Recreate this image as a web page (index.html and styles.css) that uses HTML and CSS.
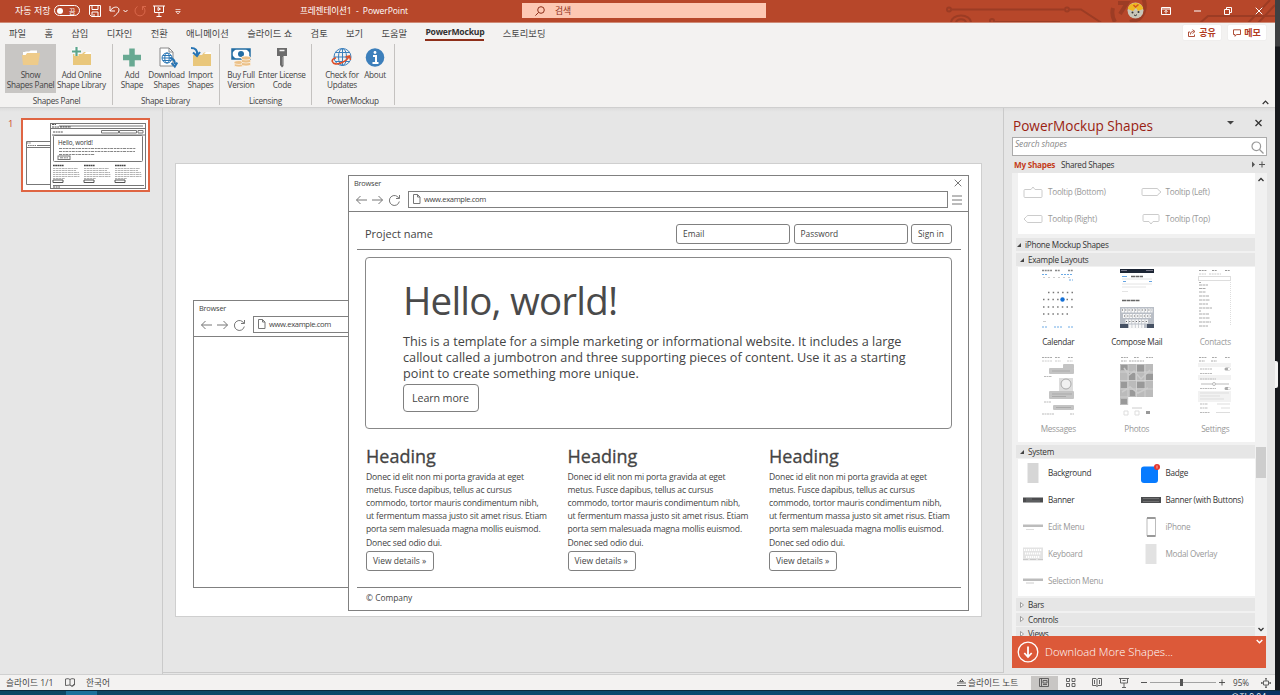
FILE: index.html
```html
<!DOCTYPE html>
<html lang="ko">
<head>
    <meta charset="UTF-8">
    <meta name="viewport" content="width=device-width, initial-scale=1.0">
    <title>프레젠테이션1 - PowerPoint</title>
    <link rel="stylesheet" href="styles.css">
</head>
<body>
<div class="screen">
    <div class="app">
        <!-- title bar -->
        <div class="titlebar">
            <svg class="circuit" width="375" height="22" viewBox="900 0 375 22" fill="none" stroke="#9c3c24" stroke-width="2">
                <circle cx="949" cy="9.500" r="2"/><path d="M951 9.500h113"/><circle cx="1067" cy="9.500" r="2"/><path d="M1069 9.500h12l20 13"/>
                <path d="M951 23c0-10 20-10 20 0M956 23c0-5 10-5 10 0"/><circle cx="992" cy="21" r="2"/><path d="M994 22h66"/>
                <path d="M1113 8a18 18 0 0 0 2 14M1118 3h9l-7 11M1143 -2a18 18 0 0 1-4 21l-9 3" stroke-width="4"/>
                <path d="M1200 23l8-7h67M1248 23l22-23M1258 23l17-18"/>
            </svg>
            <div class="quick">
                <span>자동 저장</span>
                <span class="toggle"><i></i>끔</span>
                <svg class="q-save" width="12" height="12" viewBox="0 0 12 12"><path d="M.5.5h11v11h-9l-2-2zM3 .5v4h6v-4M3 11.500V7h6v4.500M5 9v2"/></svg>
                <svg class="q-undo" width="20" height="12" viewBox="0 0 20 12"><path d="M1 1v5h5M1 6c3-5 9-5 9-1 0 3-3 4-5 6.500M14.500 5l2 2 2-2"/></svg>
                <svg class="q-redo" width="12" height="12" viewBox="0 0 12 12"><path d="M3.500 1.500a5 5 0 1 0 5 0M8.500 5V1.500H12"/></svg>
                <svg class="q-show" width="12" height="12" viewBox="0 0 12 12"><path d="M0 1h12M1.500 1v6.500h9V1M6 7.500V11M3.500 11.500h5M5 2.500v3l2.500-1.500z"/></svg>
                <svg class="q-more" width="6" height="6" viewBox="0 0 6 6"><path d="M.5.5h5M.8 2.500h4.400L3 5z" stroke-width=".7"/></svg>
            </div>
            <div class="doc-title">프레젠테이션1&nbsp; - &nbsp;PowerPoint</div>
            <div class="search">
                <svg width="10" height="10" viewBox="0 0 10 10"><circle cx="6" cy="4" r="3.300"/><path d="M3.600 6.400L.4 9.600"/></svg>
                <span>검색</span>
            </div>
            <div class="win-buttons">
                <svg class="avatar" width="17" height="17" viewBox="0 0 17 17"><circle cx="8.500" cy="8.500" r="8" fill="#c9c6b8"/><path d="M.8 7C2-1 15-1 16.200 7L11 9 9 6 6 9z" fill="#eeb823"/><path d="M6.500 3l2 2 3-2.500" stroke="#d3541f" stroke-width="1.500" fill="none"/><circle cx="5.500" cy="10.500" r="1" fill="#333"/><circle cx="11.500" cy="10" r="1" fill="#333"/><path d="M7 13q2 1.500 3-.5" stroke="#333" fill="none"/></svg>
                <svg width="10" height="8" viewBox="0 0 10 8"><path d="M.5.5h9v7h-9zM.5 2h9M5 6.500v-3M3.500 4.800L5 3.300l1.500 1.500"/></svg>
                <svg width="7" height="8" viewBox="0 0 7 8"><path d="M0 4h7"/></svg>
                <svg width="8" height="8" viewBox="0 0 8 8"><path d="M.5 2.500h5v5h-5zM2.500 2.500v-2h5v5h-2"/></svg>
                <svg width="8" height="8" viewBox="0 0 8 8"><path d="M.7.7l6.600 6.600M7.300.7L.7 7.300"/></svg>
            </div>
        </div>

        <!-- ribbon tabs -->
        <div class="tabs">
            <span>파일</span><span>홈</span><span>삽입</span><span>디자인</span><span>전환</span><span>애니메이션</span><span>슬라이드 쇼</span><span>검토</span><span>보기</span><span>도움말</span><span class="active">PowerMockup</span><span>스토리보딩</span>
            <div class="tab-actions">
                <button class="action"><svg width="8" height="8" viewBox="0 0 8 8"><path d="M2 3H.5v4.500h6V5.500M2.500 5.500c0-2.500 1-3 3-3M4.500.7L7 2.500 4.500 4.500"/></svg>공유</button>
                <button class="action"><svg width="8" height="8" viewBox="0 0 8 8"><path d="M.5.8h7v4.700H3.500L2 7.300V5.500H.5z"/></svg>메모</button>
            </div>
        </div>

        <!-- ribbon -->
        <div class="ribbon">
            <div class="group g1">
                <div class="tools">
                    <div class="tool selected" style="width:51px"><svg width="22" height="22" viewBox="0 0 22 22"><path d="M3 5h6l1.500-1.500H17V8H3z" fill="#fff"/><path d="M2 8h3l1.500-2H20l-2 12H3z" fill="#eecb8a"/><path d="M4 8l1.500-3.500H17V6H7L5.500 8z" fill="#fff"/></svg><p>Show<br>Shapes Panel</p></div>
                    <div class="tool" style="width:51px"><svg width="22" height="22" viewBox="0 0 22 22"><path d="M2 7h9l2-2h7v13H2z" fill="#e9c77b"/><path d="M13 7l2-2h5v2z" fill="#fff"/><path d="M5.500 0v9M1 4.500h9" stroke="#fff" stroke-width="4"/><path d="M5.500 0v9M1 4.500h9" stroke="#5ba58c" stroke-width="2.200"/></svg><p>Add Online<br>Shape Library</p></div>
                </div>
                <div class="group-name">Shapes Panel</div>
            </div>
            <div class="group g2">
                <div class="tools">
                    <div class="tool" style="width:32px"><svg width="22" height="22" viewBox="0 0 22 22"><path d="M11 1.500v18M2 10.500h18" stroke="#68a992" stroke-width="5.500"/></svg><p>Add<br>Shape</p></div>
                    <div class="tool" style="width:37px"><svg width="22" height="22" viewBox="0 0 22 22" fill="none"><path d="M4 1h9l4 4v14H4z" fill="#fff" stroke="#888"/><path d="M13 1v4h4" stroke="#888"/><g stroke="#2875b4"><circle cx="11" cy="11" r="5"/><ellipse cx="11" cy="11" rx="2.200" ry="5"/><path d="M6 11h10M7 8.500h8M7 13.500h8"/><path d="M14 11q5 1 5 6M15.500 16l3.300 3.500 2.500-4" stroke-width="2"/></g></svg><p>Download<br>Shapes</p></div>
                    <div class="tool" style="width:31px"><svg width="22" height="22" viewBox="0 0 22 22"><path d="M3 8h9l2-2.500h7V19H3z" fill="#e9c77b"/><path d="M14 7l2-2h5v2z" fill="#fff"/><path d="M1 1q7 0 6 7M3 5.500L7 9l3-4" fill="none" stroke="#2875b4" stroke-width="2"/></svg><p>Import<br>Shapes</p></div>
                </div>
                <div class="group-name">Shape Library</div>
            </div>
            <div class="group g3">
                <div class="tools">
                    <div class="tool" style="width:34px"><svg width="22" height="22" viewBox="0 0 22 22"><path d="M2 2h18v10H2z" fill="#fff" stroke="#236da3" stroke-width="1.500"/><path d="M2 2h4l-4 4zM20 2h-4l4 4zM2 12V8l4 4z" fill="#236da3"/><circle cx="11" cy="7" r="3" fill="#236da3"/><g fill="#ecc188" stroke="#fff" stroke-width=".6"><ellipse cx="9" cy="18" rx="5" ry="2"/><ellipse cx="9" cy="15.500" rx="5" ry="2"/><ellipse cx="16" cy="17" rx="5" ry="2"/><ellipse cx="16" cy="14" rx="5" ry="2"/><ellipse cx="16" cy="11" rx="5" ry="2"/></g></svg><p>Buy Full<br>Version</p></div>
                    <div class="tool" style="width:48px"><svg width="22" height="22" viewBox="0 0 22 22"><path d="M6 1h10v8h-3.500v10L11 20.500 9 18V9H6z" fill="#6b6b6b"/><path d="M8.500 3.500h5" stroke="#f3f2f1" stroke-width="1.500"/><path d="M12 10v8" stroke="#aaa"/></svg><p>Enter License<br>Code</p></div>
                </div>
                <div class="group-name">Licensing</div>
            </div>
            <div class="group g4">
                <div class="tools">
                    <div class="tool" style="width:38px"><svg width="22" height="22" viewBox="0 0 22 22" fill="none"><g stroke="#3b80bd"><circle cx="11.500" cy="10" r="8.500"/><ellipse cx="11.500" cy="10" rx="4" ry="8.500"/><path d="M3 10h17M4.500 5.500h14M4.500 14.500h14M11.500 1.500v17"/></g><path d="M1 14q2 5 10 1.500 5-2 7-6M14.500 10l4-1 1 4M1 14q1-3 4-3" stroke="#df4e27" stroke-width="1.600"/></svg><p>Check for<br>Updates</p></div>
                    <div class="tool" style="width:28px"><svg width="22" height="22" viewBox="0 0 22 22"><circle cx="11" cy="10.500" r="9.300" fill="#3c7fbb"/><path d="M9 9h3v6.500M8.500 16h6" stroke="#fff" stroke-width="2" fill="none"/><circle cx="11" cy="5.500" r="1.400" fill="#fff"/></svg><p>About</p></div>
                </div>
                <div class="group-name">PowerMockup</div>
            </div>
            <svg class="collapse" width="7" height="5" viewBox="0 0 7 5"><path d="M.7 4l2.800-2.800L6.300 4" fill="none" stroke="#333" stroke-width="1.200"/></svg>
        </div>

        <div class="workspace">
            <!-- slide list -->
            <div class="slides">
                <span class="slide-no">1</span>
                <div class="thumb">
                    <svg width="125" height="70" viewBox="0 0 125 70" fill="none" stroke="#777">
                        <path d="M28 21.500H3.500v43H28M3.500 27.500H28M14 25.500h14" /><path d="M4 23h4M5 25.500h8" stroke-width="1.200" stroke-dasharray="1.500 .7"/>
                        <rect x="27.500" y="3.500" width="95" height="65"/><path d="M28 8.500h94M36 6h84M29 15h93M30 65.500h91"/>
                        <path d="M29 7h7M37 6.800h11M30 12h10M30 67h7M29 4.500h4" stroke="#555" stroke-width="1.200" stroke-dasharray="2 .6"/>
                        <path d="M78.500 10.500h17v2.500h-17zM96.500 10.500h17v2.500h-17zM115 10.500h5v2.500h-5z"/>
                        <rect x="30.500" y="15.500" width="89" height="26" rx="1"/><rect x="35" y="36" width="12" height="3.500"/>
                        <path d="M36 28.500h77M36 31.500h76M36 34.500h36M37 37.800h8" stroke-width=".9" stroke-dasharray="3 .8 2 .6"/>
                        <path d="M30 45.500h11M61 45.500h11M92 45.500h11" stroke="#444" stroke-width="1.400" stroke-dasharray="1.800 .4"/>
                        <path d="M30 48.500h25M30 50.500h23M30 52.500h26M30 54.500h27M30 56.500h27M30 58.500h12M61 48.500h25M61 50.500h23M61 52.500h26M61 54.500h27M61 56.500h27M61 58.500h12M92 48.500h25M92 50.500h23M92 52.500h26M92 54.500h27M92 56.500h27M92 58.500h12" stroke="#aaa" stroke-width=".9" stroke-dasharray="2 .6 3 .5"/>
                        <path d="M30 60h10v2.500H30zM61 60h10v2.500H61zM92 60h10v2.500H92z" stroke="#555"/>
                        <text x="35" y="25" class="thumb-text">Hello, world!</text>
                    </svg>
                </div>
            </div>

            <!-- canvas with the two mockup windows -->
            <div class="editor">
                <div class="slide">
                    <div class="browser back">
                        <div class="chrome">
                            <div class="chrome-title">Browser</div>
                            <div class="nav">
                                <svg width="48" height="14" viewBox="0 0 48 14"><path d="M1.500 7H12M5.500 3l-4 4 4 4M17 7h10.500M23.500 3l4 4-4 4M44 5.500a5 5 0 1 0 .3 3M44.500 2v3.500H41"/></svg>
                                <div class="url"><svg width="8" height="10" viewBox="0 0 8 10"><path d="M.5.5h4l2.500 2.500v6.500H.5zM4.500.5V3H7"/></svg>www.example.com</div>
                            </div>
                        </div>
                    </div>
                    <div class="browser front">
                        <div class="chrome">
                            <div class="chrome-title">Browser<svg width="8" height="8" viewBox="0 0 8 8"><path d="M.7.7l6.600 6.600M7.300.7L.7 7.300"/></svg></div>
                            <div class="nav">
                                <svg width="48" height="14" viewBox="0 0 48 14"><path d="M1.500 7H12M5.500 3l-4 4 4 4M17 7h10.500M23.500 3l4 4-4 4M44 5.500a5 5 0 1 0 .3 3M44.500 2v3.500H41"/></svg>
                                <div class="url"><svg width="8" height="10" viewBox="0 0 8 10"><path d="M.5.5h4l2.500 2.500v6.500H.5zM4.500.5V3H7"/></svg>www.example.com</div>
                                <svg class="menu" width="10" height="10" viewBox="0 0 10 10"><path d="M0 1h10M0 5h10M0 9h10"/></svg>
                            </div>
                        </div>
                        <div class="page">
                            <div class="page-head">
                                <span class="project">Project name</span>
                                <span class="field">Email</span>
                                <span class="field">Password</span>
                                <span class="field sign">Sign in</span>
                            </div>
                            <div class="jumbotron">
                                <h1>Hello, world!</h1>
                                <p>This is a template for a simple marketing or informational website. It includes a large<br>callout called a jumbotron and three supporting pieces of content. Use it as a starting<br>point to create something more unique.</p>
                                <span class="learn">Learn more</span>
                            </div>
                            <div class="columns">
                                <div class="col">
                                    <h2>Heading</h2>
                                    <p>Donec id elit non mi porta gravida at eget<br>metus. Fusce dapibus, tellus ac cursus<br>commodo, tortor mauris condimentum nibh,<br>ut fermentum massa justo sit amet risus. Etiam<br>porta sem malesuada magna mollis euismod.<br>Donec sed odio dui.</p>
                                    <span class="details">View details »</span>
                                </div>
                                <div class="col">
                                    <h2>Heading</h2>
                                    <p>Donec id elit non mi porta gravida at eget<br>metus. Fusce dapibus, tellus ac cursus<br>commodo, tortor mauris condimentum nibh,<br>ut fermentum massa justo sit amet risus. Etiam<br>porta sem malesuada magna mollis euismod.<br>Donec sed odio dui.</p>
                                    <span class="details">View details »</span>
                                </div>
                                <div class="col">
                                    <h2>Heading</h2>
                                    <p>Donec id elit non mi porta gravida at eget<br>metus. Fusce dapibus, tellus ac cursus<br>commodo, tortor mauris condimentum nibh,<br>ut fermentum massa justo sit amet risus. Etiam<br>porta sem malesuada magna mollis euismod.<br>Donec sed odio dui.</p>
                                    <span class="details">View details »</span>
                                </div>
                            </div>
                            <div class="page-foot">© Company</div>
                        </div>
                    </div>
                </div>
            </div>

            <!-- shapes panel -->
            <div class="panel">
                <div class="panel-title">PowerMockup Shapes
                    <svg width="36" height="10" viewBox="0 0 36 10"><path d="M0 3h7L3.500 6.500z" fill="#444"/><path d="M28.500 2l6 6M34.500 2l-6 6" stroke="#333" stroke-width="1.300"/></svg>
                </div>
                <div class="panel-search">Search shapes
                    <svg width="13" height="13" viewBox="0 0 13 13"><circle cx="5.300" cy="5.300" r="4.300"/><path d="M8.500 8.500l4 4"/></svg>
                </div>
                <div class="panel-tabs"><b>My Shapes</b><span>Shared Shapes</span>
                    <svg width="13" height="7" viewBox="0 0 13 7"><path d="M0 .5l3 3-3 3z" fill="#555"/><path d="M7 3.500h6M10 .5v6" stroke="#555"/></svg>
                </div>
                <div class="list">
                    <div class="tree">
                        <div class="box tips">
                            <div class="item dim"><svg width="20" height="20" viewBox="0 0 20 20"><path class="line" d="M2 7.500h6L10 5l2 2.500h6q1 0 1 1v6q0 1-1 1H2q-1 0-1-1v-6q0-1 1-1z"/></svg>Tooltip (Bottom)</div>
                            <div class="item dim"><svg width="20" height="20" viewBox="0 0 20 20"><path class="line" d="M2 6.500h14q1 0 1 1l3 2.500-3 2.500q0 1-1 1H2q-1 0-1-1v-5q0-1 1-1z"/></svg>Tooltip (Left)</div>
                            <div class="item dim"><svg width="20" height="20" viewBox="0 0 20 20"><path class="line" d="M18 6.500H5q-1 0-1.500 1L1 10l2.500 2.500q.5 1 1.500 1h13q1 0 1-1v-5q0-1-1-1z"/></svg>Tooltip (Right)</div>
                            <div class="item dim"><svg width="20" height="20" viewBox="0 0 20 20"><path class="line" d="M3 5.500h14q1 0 1 1v5q0 1-1 1h-5L10 15l-2-2.500H3q-1 0-1-1v-5q0-1 1-1z"/></svg>Tooltip (Top)</div>
                        </div>
                        <div class="node top"><svg width="6" height="6" viewBox="0 0 6 6"><path d="M5 1v4H1z" fill="#444"/></svg>iPhone Mockup Shapes</div>
                        <div class="node"><svg width="6" height="6" viewBox="0 0 6 6"><path d="M5 1v4H1z" fill="#444"/></svg>Example Layouts</div>
                        <div class="box layouts">
                            <div class="card"><svg width="34" height="60" viewBox="0 0 34 60" fill="none">
                                <path d="M1 1.500h10M14 1.500h5M27 1.500h5" stroke="#888" stroke-width="1.300" stroke-dasharray="2 .7"/><path d="M1 5.500h6M20 5.500h12M28 11h4M1 58h5M13 58h8M27 58h5" stroke="#6cabe6" stroke-dasharray="2 1"/>
                                <path d="M2 8.500h30" stroke="#ccc" stroke-dasharray="2 3"/><g stroke="#777" stroke-width="1.500" stroke-dasharray="1.500 3.200"><path d="M7 23.500h25M2 30.500h30M2 38h30M2 45h26"/></g><path d="M2 52.500h3" stroke="#ccc"/><circle cx="21.500" cy="30.500" r="2.200" fill="#126fd6"/></svg>Calendar</div>
                            <div class="card"><svg width="34" height="60" viewBox="0 0 34 60" fill="none">
                                <path d="M0 0h34v4H0z" fill="#1c2534"/><path d="M1 1.500h6M26 1.500h7" stroke="#778"/><path d="M1 4h32v34H1z" fill="#fff"/><path d="M2 7.500h5M3 12.500h3M29 12.500h3" stroke="#65a4e2"/><path d="M11 7.500h12M2 31.500h18" stroke="#666" stroke-width="1.300" stroke-dasharray="4 .5"/><path d="M2 10h30M2 15h30M2 18h24M2 22.500h6" stroke="#e4e4e4"/>
                                <path d="M0 38h34v21H0z" fill="#b9bec6"/><path d="M1.500 41.500h31M3 47h28M5.500 52.500h23M9 57.500h15" stroke="#f8f8f8" stroke-width="4" stroke-dasharray="2.600 .7"/><path d="M2 41h30M4 47h27M6 52.500h22" stroke="#555" stroke-dasharray="1 2.300"/><path d="M0 55h8v4H0zM27 55h7v4h-7z" fill="#465163"/></svg>Compose Mail</div>
                            <div class="card dim"><svg width="34" height="60" viewBox="0 0 34 60" fill="none">
                                <path d="M1 1.500h8M14 1.500h5M27 1.500h5" stroke="#999" stroke-dasharray="2 .7"/><path d="M1 5h7M11 5h12" stroke="#ccc" stroke-dasharray="2 .7"/><rect x=".5" y="7.500" width="32" height="4" stroke="#ddd"/><path d="M32.500 13v44" stroke="#ddd" stroke-dasharray="1 1"/>
                                <path d="M1 13.500h2M1 16h9M1 19.500h7M1 23h7M1 27h10M1 31h11M1 35h9M1 39h13M1 42h2M1 45h10M1 49h11M1 53h12M1 57h9" stroke="#aaa" stroke-dasharray="3 .5"/></svg>Contacts</div>
                            <div class="card dim"><svg width="34" height="60" viewBox="0 0 34 60" fill="none">
                                <path d="M1 1.500h10M14 1.500h5M27 1.500h5" stroke="#aaa" stroke-dasharray="2 .7"/><path d="M1 5h10M14 5h6M26 5h6" stroke="#ccc" stroke-dasharray="2 .7"/><g fill="#c4c4c4"><rect x="22" y="8" width="11" height="5" rx="1"/><rect x="8" y="12" width="25" height="6" rx="1"/><rect x="8" y="35" width="25" height="8" rx="1"/><rect x="12" y="49" width="21" height="5" rx="1"/></g><rect x="18" y="22" width="14" height="13" fill="#ddd"/><circle cx="25" cy="28" r="5" fill="#f1f1f1" stroke="#aaa"/><path d="M3 20.500h8M3 46h7M1 58h12M29 58h4" stroke="#bbb" stroke-dasharray="2 .5"/><path d="M11 15h18M11 38h20M11 40.500h14M15 51.500h15" stroke="#aaa"/></svg>Messages</div>
                            <div class="card dim"><svg width="34" height="60" viewBox="0 0 34 60" fill="none">
                                <path d="M1 1.500h7M14 1.500h5M26 1.500h7M1 5h6M9 5h15" stroke="#aaa" stroke-dasharray="2 .7"/><path d="M0 8h33v33H8v8H0z" fill="#bbb"/><g fill="#999"><path d="M1 9h7v5H1zM17 9h7v7h-7zM9 17h6v7H9zM26 18h7v6h-7zM1 26h6v6H1zM17 26h8v6h-8zM10 34h5v6h-5zM1 43h6v5H1z"/></g><path d="M8 8v41M16.500 8v33M25 8v33M0 16h33M0 24.500h33M0 33h33M0 41h8" stroke="#ddd" stroke-width=".6"/><path d="M4 12l5 7 5-4 7 8 9-9M2 36l8-5 8 6 10-5" stroke="#ccc" stroke-width="1.500"/><path d="M12 52h10" stroke="#ccc"/><path d="M4 55h4v4H4zM15 55h4v4h-4z" stroke="#ddd"/><path d="M26 55h4v3h-4z" fill="#999"/></svg>Photos</div>
                            <div class="card dim"><svg width="34" height="60" viewBox="0 0 34 60" fill="none">
                                <path d="M0 7h33v52H0z" fill="#f2f2f2"/><path d="M1 1.500h8M14 1.500h5M27 1.500h5M1 5h6M13 5h6" stroke="#aaa" stroke-dasharray="2 .7"/><path d="M0 11h33v8H0zM0 24h33v11H0zM0 46h33v13H0z" fill="#fff"/><path d="M2 13h12M2 17.500h12M2 23h16M2 32.500h16M2 48h8M2 52h8M2 56.500h10" stroke="#bbb" stroke-dasharray="2 .5"/><path d="M2 37h29M2 40h20M2 43h24M19 48h13M23 52h9M18 56.500h14" stroke="#ddd"/><path d="M3 28h28" stroke="#bbb"/><circle cx="16" cy="28" r="1.500" fill="#fff" stroke="#bbb"/><path d="M28 13h3M28 32.500h3" stroke="#aaa" stroke-width="3" stroke-linecap="round"/><circle cx="31" cy="13" r="1.200" fill="#fff"/><circle cx="31" cy="32.500" r="1.200" fill="#fff"/></svg>Settings</div>
                        </div>
                        <div class="node"><svg width="6" height="6" viewBox="0 0 6 6"><path d="M5 1v4H1z" fill="#444"/></svg>System</div>
                        <div class="box system">
                            <div class="item"><svg width="20" height="20" viewBox="0 0 20 20"><path d="M4.500 0h11v20h-11z" fill="#d6d6d6"/></svg>Background</div>
                            <div class="item"><svg width="20" height="20" viewBox="0 0 20 20"><rect x="0" y="3.500" width="17" height="16.500" rx="3" fill="#077bff"/><circle cx="16" cy="4" r="3" fill="#e5352c"/><path d="M16 2.500v3" stroke="#fff" stroke-width=".6"/></svg>Badge</div>
                            <div class="item"><svg width="20" height="20" viewBox="0 0 20 20"><path d="M0 7.500h20v5H0z" fill="#4b4c4e"/><path d="M3 9h6M3 11h14" stroke="#77797c" stroke-width=".8"/></svg>Banner</div>
                            <div class="item"><svg width="20" height="20" viewBox="0 0 20 20"><path d="M0 7h20v6H0z" fill="#4b4c4e"/><path d="M2 8.500h16M2 11.500h16" stroke="#777" stroke-width=".8"/></svg>Banner (with Buttons)</div>
                            <div class="item dim"><svg width="20" height="20" viewBox="0 0 20 20"><path d="M0 7.500h20v2.500H0z" fill="#bcbcbc"/><path d="M3 12.500h8" stroke="#ddd" fill="none"/></svg>Edit Menu</div>
                            <div class="item dim"><svg width="20" height="20" viewBox="0 0 20 20"><rect x="6" y=".5" width="8.500" height="19" rx="1" fill="#fff" stroke="#bbb"/><path d="M6 1h8.500M6 19h8.500" stroke="#999" stroke-width="2"/></svg>iPhone</div>
                            <div class="item dim"><svg width="20" height="20" viewBox="0 0 20 20"><path d="M0 3.500h20v13H0z" fill="#e3e3e3"/><path d="M1 6h18M2 9.500h16M3 13h14" stroke="#fff" stroke-width="2" stroke-dasharray="1.300 .7"/><path d="M0 15.500h5M7 15.500h6M15 15.500h5" stroke="#c9c9c9"/></svg>Keyboard</div>
                            <div class="item dim"><svg width="20" height="20" viewBox="0 0 20 20"><path d="M4.500 0h11v20h-11z" fill="#e2e2e2"/></svg>Modal Overlay</div>
                            <div class="item dim"><svg width="20" height="20" viewBox="0 0 20 20"><path d="M0 7.500h20v2.500H0z" fill="#bcbcbc"/><path d="M3 12h8" stroke="#ccc" fill="none"/></svg>Selection Menu</div>
                        </div>
                        <div class="node closed"><svg width="6" height="6" viewBox="0 0 6 6"><path d="M1.500.5l3 2.500-3 2.500z" fill="#fff" stroke="#888" stroke-width=".8"/></svg>Bars</div>
                        <div class="node closed"><svg width="6" height="6" viewBox="0 0 6 6"><path d="M1.500.5l3 2.500-3 2.500z" fill="#fff" stroke="#888" stroke-width=".8"/></svg>Controls</div>
                        <div class="node closed"><svg width="6" height="6" viewBox="0 0 6 6"><path d="M1.500.5l3 2.500-3 2.500z" fill="#fff" stroke="#888" stroke-width=".8"/></svg>Views</div>
                    </div>
                    <div class="scroll">
                        <svg width="6" height="5" viewBox="0 0 6 5"><path d="M.5 4L3 1.500 5.500 4"/></svg>
                        <i></i>
                        <svg width="6" height="5" viewBox="0 0 6 5"><path d="M.5 1L3 3.500 5.500 1"/></svg>
                    </div>
                </div>
                <div class="download">
                    <svg width="22" height="22" viewBox="0 0 22 22"><circle cx="11" cy="11" r="9.800" stroke-width="1.300"/><path d="M11 5.500v10M7.300 12l3.700 4 3.700-4" stroke-width="1.800"/></svg>
                    <span>Download More Shapes...</span>
                    <svg class="drop" width="7" height="5" viewBox="0 0 7 5"><path d="M.7 1l2.800 2.700L6.300 1" stroke-width="1.400"/></svg>
                </div>
            </div>
        </div>

        <!-- status bar -->
        <div class="status">
            <span class="count">슬라이드 1/1</span>
            <svg class="spell" width="10" height="9" viewBox="0 0 10 9"><path d="M.5 1q3-1 4.500.5Q6.500 0 9.500 1v6L7 8.500 5 7 .5 7.500zM5 1.500V7M6.500 7l1 1 2-2.500"/></svg>
            <span>한국어</span>
            <div class="status-right">
                <svg class="notes-icon" width="9" height="8" viewBox="0 0 9 8"><path d="M0 4h9M0 6.500h9M2.500 2.500L4.500.5l2 2z"/></svg>
                <span class="notes">슬라이드 노트</span>
                <span class="view on"><svg width="10" height="9" viewBox="0 0 10 9"><path d="M.5.5h9v8h-9zM2.500.5v8M4 2.500h4v2.500H4zM4 6.500h4"/></svg></span>
                <span class="view"><svg width="10" height="9" viewBox="0 0 10 9"><path d="M.5.5h3v3h-3zM6 .5h3v3H6zM.5 5.500h3v3h-3zM6 5.500h3v3H6z"/></svg></span>
                <span class="view"><svg width="10" height="9" viewBox="0 0 10 9"><path d="M.5.5h3.500l1 1 1-1h3.500v7H6l-1 1-1-1H.5zM5 1.500v7M2.500 2v4M7.500 2v4"/></svg></span>
                <span class="view"><svg width="10" height="10" viewBox="0 0 10 10"><path d="M0 .5h10M1.500.5v4.500h7V.5M5 5v4M3 9.500h4M3.500 2.500h3"/></svg></span>
                <svg class="zoom" width="84" height="9" viewBox="0 0 84 9"><path d="M0 4.500h6M78 4.500h6M81 1.500v6" stroke="#444"/><path d="M9 4.500h66" stroke="#999"/><path d="M39 1h3v7h-3z" fill="#555" stroke="none"/></svg>
                <span class="percent">95%</span>
                <svg width="10" height="10" viewBox="0 0 10 10"><path d="M2.500 3h5v4h-5zM5 0v3M5 7v3M0 5h2.500M7.500 5H10M4 1.200L5 .3l1 .9M4 8.800l1 .9 1-.9M1.200 4L.3 5l.9 1M8.800 4l.9 1-.9 1"/></svg>
            </div>
        </div>
    </div>
    <div class="edge"><i></i></div>
</div>
<div class="taskbar"><i></i><span>오전 9:04</span></div>
</body>
</html>
```

FILE: styles.css
```css
* {
    box-sizing: border-box;
}
body {
    margin: 0;
    width: 1280px;
    height: 695px;
    overflow: hidden;
    background: #e6e6e6;
    font-family: 'Open Sans', 'Noto Sans CJK KR', sans-serif;
    font-size: 8.2px;
    color: #444;
}
p, h1, h2 {
    margin: 0;
    font-weight: 400;
}
svg {
    display: block;
    flex: none;
}
.screen {
    display: flex;
    height: 690px;
}
.app {
    width: 1275px;
    display: flex;
    flex-direction: column;
}
.edge {
    width: 5px;
    padding-top: 361px;
    background: linear-gradient(#3f4042 0, #3f4042 46px, #17191d 47px);
}
.edge i {
    display: block;
    width: 3px;
    height: 27px;
    border-radius: 0 2px 2px 0;
    background: #f4f4f4;
}

/* title bar */
.titlebar {
    position: relative;
    display: flex;
    align-items: center;
    height: 23px;
    padding-bottom: 1px;
    background: #b7472a;
    border-bottom: 1px solid #cf8a76;
    color: #fff;
    font-size: 9px;
}
.titlebar svg {
    fill: none;
    stroke: #fff;
}
.titlebar .circuit {
    position: absolute;
    right: 0;
    top: 0;
    stroke: #9c3c24;
}
.quick {
    display: flex;
    align-items: center;
    width: 285px;
    padding-left: 15px;
}
.quick span {
    white-space: nowrap;
}
.quick .toggle {
    display: flex;
    align-items: center;
    justify-content: space-between;
    width: 26px;
    height: 11px;
    margin-left: 4px;
    padding: 0 4px 0 2px;
    border: 1px solid #fff;
    border-radius: 6px;
    font-size: 7px;
}
.toggle i {
    width: 6px;
    height: 6px;
    border-radius: 50%;
    background: #fff;
}
.q-save {
    margin-left: 9px;
}
.q-undo {
    margin-left: 8px;
}
.titlebar .q-redo {
    margin-left: 5px;
    stroke: #d9684b;
}
.q-show {
    margin-left: 7px;
}
.q-more {
    margin: 2px 0 0 10px;
}
.doc-title {
    width: 237px;
    padding-left: 15px;
    font-size: 8.6px;
    letter-spacing: -0.1px;
    white-space: nowrap;
}
.search {
    display: flex;
    align-items: center;
    gap: 10px;
    width: 244px;
    height: 15px;
    padding-left: 13px;
    background: #fdc8b3;
    color: #8c2d18;
    font-size: 8.8px;
}
.search svg {
    stroke: #8c2d18;
}
.win-buttons {
    position: relative;
    display: flex;
    align-items: center;
    gap: 23px;
    margin-left: auto;
    padding-right: 12px;
}
.titlebar .avatar {
    margin-right: -6px;
    stroke: none;
}

/* tabs */
.tabs {
    display: flex;
    align-items: center;
    gap: 18.3px;
    height: 20px;
    padding: 0 0 1px 9px;
    background: #f3f2f1;
    font-size: 9.3px;
    white-space: nowrap;
}
.tabs .active {
    height: 16px;
    margin-top: 1px;
    width: 59px;
    border-bottom: 2px solid #8e2f1a;
    color: #333;
    font-size: 8.6px;
    font-weight: 700;
    line-height: 15px;
    letter-spacing: -0.2px;
}
.tab-actions {
    display: flex;
    gap: 7px;
    margin-left: auto;
    padding-right: 9px;
}
.action {
    display: flex;
    align-items: center;
    justify-content: center;
    gap: 3px;
    width: 38px;
    height: 15px;
    padding: 0;
    border: 0;
    border-radius: 1px;
    background: #fff;
    box-shadow: 0 0 1px #ccc;
    color: #b23b20;
    font-family: inherit;
    font-size: 9px;
    font-weight: 700;
}
.action svg {
    fill: none;
    stroke: #a63c24;
    stroke-width: .9;
}

/* ribbon */
.ribbon {
    position: relative;
    display: flex;
    flex: none;
    height: 65px;
    padding-top: 1px;
    background: #f3f2f1;
    border-bottom: 1px solid #cfcfcf;
    letter-spacing: -0.28px;
}
.group {
    height: 61px;
    border-right: 1px solid #c4c2c0;
}
.g1 {
    width: 113px;
    padding-left: 5px;
}
.g2 {
    width: 107px;
    padding-left: 3px;
}
.g3 {
    width: 92px;
    padding-left: 4px;
}
.g4 {
    width: 83px;
    padding-left: 11px;
}
.tools {
    display: flex;
    height: 50px;
}
.tool {
    flex: none;
    height: 49px;
    padding-top: 3px;
    text-align: center;
    white-space: nowrap;
}
.tool svg {
    margin: 0 auto;
}
.tool p {
    margin: 1px -4px 0;
    line-height: 10px;
}
.selected {
    background: #c8c6c4;
}
.group-name {
    padding-right: 4px;
    line-height: 14px;
    text-align: center;
}
.g4 .group-name {
    padding-right: 0;
    margin-left: -11px;
}
.collapse {
    position: absolute;
    right: 6px;
    bottom: 2px;
}

/* workspace */
.workspace {
    display: flex;
    height: 566px;
    background: linear-gradient(#dcdcdc, #e6e6e6 4px);
}
.slides {
    display: flex;
    align-items: flex-start;
    width: 163px;
    padding: 10px 0 0 8px;
    border-right: 1px solid #cacaca;
}
.slide-no {
    width: 13px;
    color: #cf4a2b;
    font-size: 9.5px;
    line-height: 11px;
}
.thumb {
    width: 129px;
    height: 74px;
    border: 2px solid #df6543;
    background: #fff;
}
.thumb-text {
    fill: #333;
    stroke: none;
    font-size: 6.3px;
    letter-spacing: -0.15px;
}
.editor {
    width: 841px;
    height: 565px;
    padding: 55px 0 0 12px;
    border-right: 1px solid #cacaca;
    border-bottom: 1px solid #cacaca;
}
.slide {
    position: relative;
    width: 807px;
    height: 454px;
    background: #fff;
    border: 1px solid #cfcfcf;
}

/* mockup windows */
.browser {
    position: absolute;
    background: #fff;
    border: 1px solid #808080;
    color: #444;
}
.browser svg {
    fill: none;
    stroke: #777;
    stroke-width: 1;
}
.back {
    left: 17px;
    top: 136px;
    width: 400px;
    height: 288px;
}
.front {
    left: 172px;
    top: 11px;
    width: 621px;
    height: 436px;
}
.chrome {
    height: 36px;
    border-bottom: 1px solid #808080;
}
.chrome-title {
    display: flex;
    align-items: center;
    justify-content: space-between;
    height: 15px;
    padding: 0 6px 1px 5px;
    font-size: 7.4px;
    letter-spacing: -0.22px;
}
.nav {
    display: flex;
    align-items: center;
    padding-left: 6px;
}
.url {
    display: flex;
    align-items: center;
    gap: 3px;
    width: 540px;
    height: 17px;
    margin-left: 5px;
    padding: 0 0 1px 4px;
    border: 1px solid #808080;
    font-size: 7.6px;
    letter-spacing: -0.35px;
}
.back .nav {
    overflow: hidden;
}
.menu {
    margin-left: 4px;
}
.page {
    padding: 0 7px 0 8px;
}
.page-head {
    display: flex;
    align-items: center;
    gap: 3.5px;
    height: 38px;
    padding: 7px 9px 0 8px;
    border-bottom: 1px solid #808080;
}
.project {
    margin: 0 auto 1px 0;
    font-size: 11px;
}
.field {
    width: 114px;
    height: 20px;
    padding-left: 6px;
    border: 1px solid #808080;
    border-radius: 3px;
    font-size: 8.4px;
    line-height: 18px;
}
.sign {
    width: 41px;
}
.jumbotron {
    height: 172px;
    margin: 7px 9px 0 8px;
    padding: 15px 0 0 37px;
    border: 1px solid #888;
    border-radius: 4px;
}
.jumbotron h1 {
    font-size: 38.5px;
    line-height: 54px;
    letter-spacing: -0.8px;
    color: #4a4a4a;
}
.jumbotron p {
    margin-top: 6px;
    font-size: 12.7px;
    line-height: 16px;
    white-space: nowrap;
}
.learn {
    display: block;
    width: 76px;
    height: 28px;
    margin-top: 3px;
    padding-left: 8px;
    border: 1px solid #808080;
    border-radius: 4px;
    font-size: 10.7px;
    line-height: 26px;
    letter-spacing: -0.1px;
}
.columns {
    display: flex;
    padding: 16px 0 0 9px;
}
.col {
    flex: none;
    width: 201.5px;
}
.col h2 {
    font-size: 18px;
    line-height: 23px;
    -webkit-text-stroke: 0.3px #444;
}
.col p {
    margin-top: 2.5px;
    font-size: 8.6px;
    line-height: 13.2px;
    letter-spacing: -0.18px;
    white-space: nowrap;
}
.details {
    display: block;
    width: 68px;
    height: 20px;
    margin-top: 1px;
    border: 1px solid #808080;
    border-radius: 3px;
    padding-left: 6px;
    font-size: 8.5px;
    line-height: 18px;
}
.page-foot {
    margin-top: 16.500px;
    padding-left: 9px;
    border-top: 1px solid #808080;
    font-size: 8.4px;
    line-height: 20px;
}

/* shapes panel */
.panel {
    width: 271px;
    padding: 8px 8px 0;
    color: #333;
    letter-spacing: -0.27px;
}
.panel-title {
    display: flex;
    align-items: center;
    height: 21px;
    padding: 0 0 2px 1px;
    color: #9a1e12;
    font-size: 13.6px;
    letter-spacing: 0;
    line-height: 19px;
    white-space: nowrap;
}
.panel-title svg {
    margin: -6px 4px 0 auto;
}
.panel-search {
    display: flex;
    justify-content: space-between;
    height: 19px;
    padding: 0 2px;
    border: 1px solid #ababab;
    background: #fff;
    color: #888;
    font-size: 8.4px;
    font-style: italic;
    line-height: 12px;
    letter-spacing: -0.1px;
}
.panel-search svg {
    margin-top: 3px;
    fill: none;
    stroke: #999;
    stroke-width: 1.2;
}
.panel-tabs {
    display: flex;
    align-items: center;
    gap: 6px;
    height: 17px;
    padding: 0 2px;
}
.panel-tabs b {
    color: #c43e1c;
}
.panel-tabs svg {
    margin-left: auto;
}
.list {
    display: flex;
    width: 255px;
    height: 463px;
    padding-left: 4px;
    background: #f1f1f1;
    overflow: hidden;
}
.tree {
    width: 239px;
}
.box {
    display: grid;
    align-content: start;
    margin-left: 2px;
    background: #fff;
}
.tips, .system {
    grid-template-columns: 117.5px 119px;
    grid-auto-rows: 27.1px;
    padding-left: 5px;
}
.tips {
    height: 61px;
    padding-top: 5px;
}
.system {
    height: 137px;
}
.layouts {
    grid-template-columns: repeat(3, 78.500px);
    grid-auto-rows: 87px;
    height: 175px;
    padding: 2px 0 0 1px;
    margin-bottom: 3px;
}
.item {
    display: flex;
    align-items: center;
    gap: 5px;
    white-space: nowrap;
}
.line {
    fill: none;
    stroke: #ccc;
}
.card {
    display: flex;
    flex-direction: column;
    align-items: center;
    gap: 7px;
}
.dim {
    color: #999;
}
.node {
    display: flex;
    align-items: center;
    gap: 3px;
    height: 13px;
    margin-bottom: 1px;
    padding-left: 3px;
    background: #e6e6e6;
}
.top {
    gap: 3px;
    margin: 4px 0 2px;
    padding-left: 0;
}
.closed {
    margin: 2px 0 1.5px;
}
.closed + .closed {
    margin-top: 0;
}
.scroll {
    display: flex;
    flex-direction: column;
    align-items: center;
    width: 12px;
    padding: 4px 0;
}
.scroll svg {
    fill: none;
    stroke: #333;
    stroke-width: 1.3;
}
.scroll i {
    width: 10px;
    height: 31px;
    margin: 265px 0 auto;
    background: #cdcdcd;
}
.download {
    display: flex;
    align-items: center;
    gap: 6px;
    width: 254px;
    height: 32px;
    padding-left: 5px;
    background: #dc5939;
    color: #fff;
    font-size: 11.2px;
    font-weight: 300;
    letter-spacing: 0;
}
.download span {
    margin-bottom: 1px;
}
.download svg {
    fill: none;
    stroke: #fff;
}
.download .drop {
    align-self: flex-start;
    margin: 3px 3px 0 auto;
}

/* status bar */
.status {
    display: flex;
    align-items: center;
    height: 16px;
    padding-left: 6px;
    background: #f3f2f1;
    border-top: 1px solid #d0d0d0;
    font-size: 8.7px;
    white-space: nowrap;
}
.status svg {
    fill: none;
    stroke: #555;
    stroke-width: .9;
}
.count {
    width: 59px;
}
.spell {
    margin-right: 11px;
}
.status-right {
    display: flex;
    align-items: center;
    margin-left: auto;
    padding-right: 4px;
}
.notes {
    width: 63px;
    margin-left: 2px;
}
.view {
    display: flex;
    align-items: center;
    justify-content: center;
    width: 26.5px;
    height: 14px;
}
.on {
    background: #c8c6c4;
}
.zoom {
    margin-left: 4px;
}
.percent {
    width: 28px;
    margin-left: 8px;
    font-size: 8.2px;
}

/* windows taskbar, cut off by the bottom of the screen */
.taskbar {
    display: flex;
    height: 5px;
    border-top: 1px solid #0b2a3c;
    background: linear-gradient(90deg, #0d4763, #0a4a70 60%, #083163);
    overflow: hidden;
}
.taskbar i {
    width: 31px;
    height: 5px;
    margin-left: 66px;
    background: #1c719b;
}
.taskbar span {
    margin: 1px 14px 0 auto;
    color: #fff;
    font-size: 8.5px;
    line-height: 10px;
}
```
